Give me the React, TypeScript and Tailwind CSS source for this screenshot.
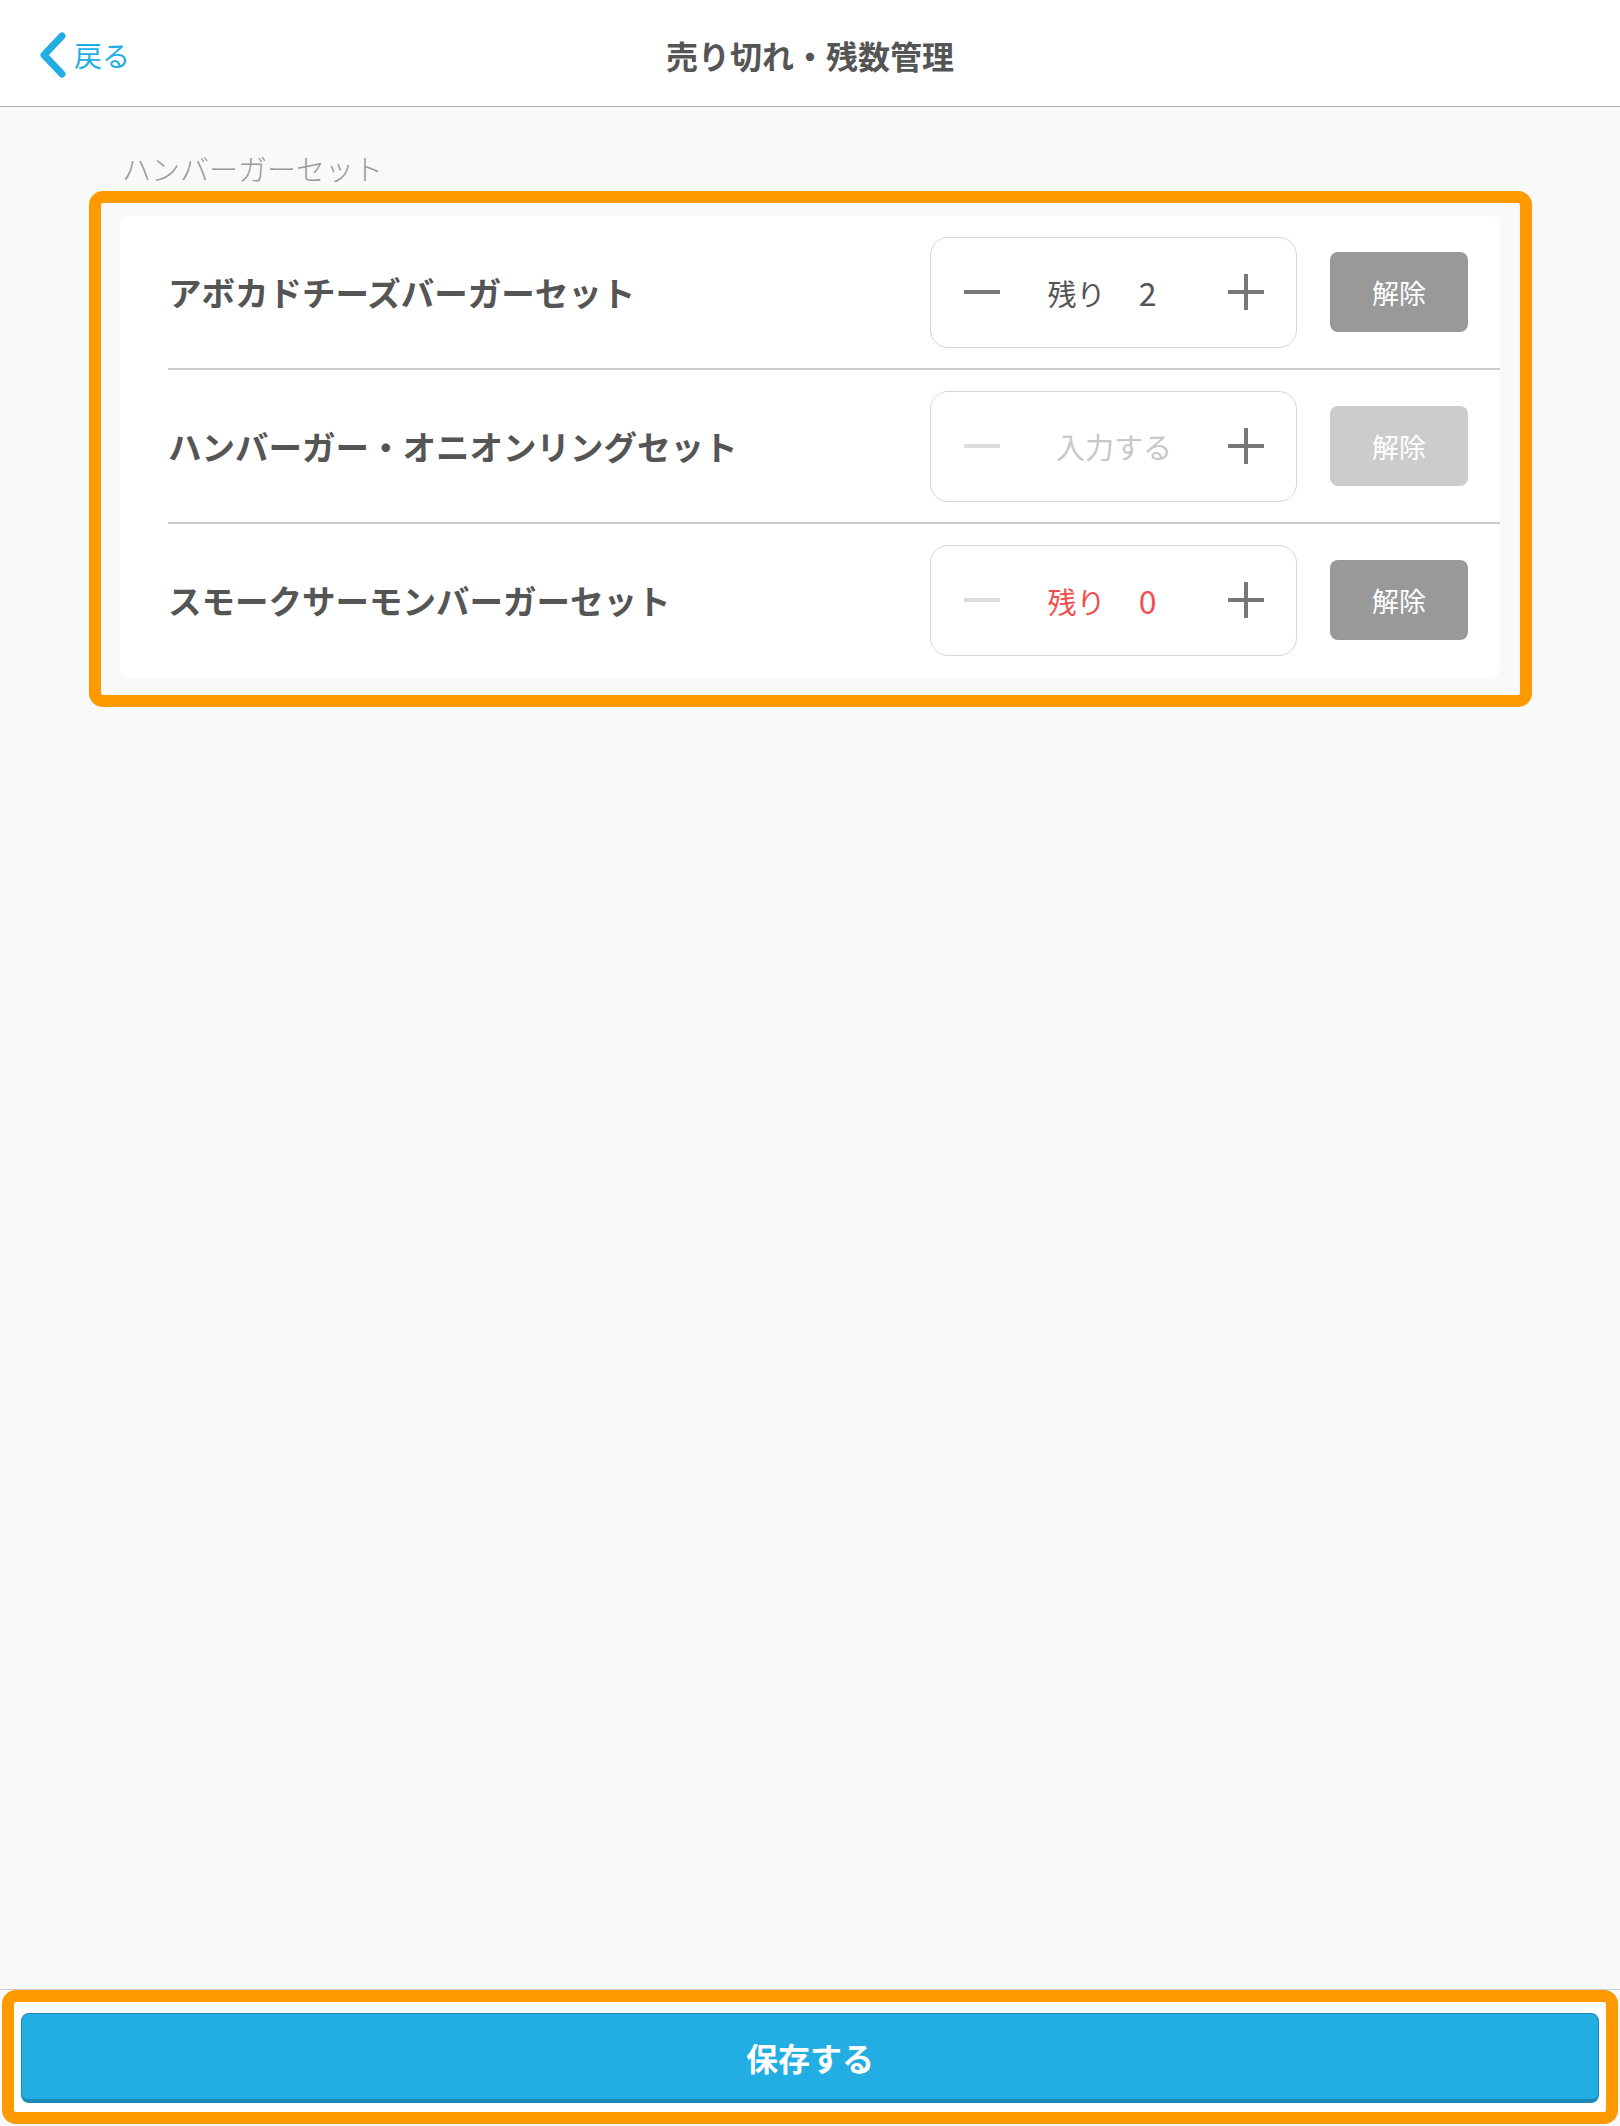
import React from "react";

const font = { fontFamily: '"Noto Sans CJK JP", "Noto Sans", sans-serif' };

type Item = {
  name: string;
  kind: "count" | "empty" | "zero";
  value?: number;
};

const items: Item[] = [
  { name: "アボカドチーズバーガーセット", kind: "count", value: 2 },
  { name: "ハンバーガー・オニオンリングセット", kind: "empty" },
  { name: "スモークサーモンバーガーセット", kind: "zero", value: 0 },
];

function Minus({ active }: { active: boolean }) {
  return (
    <div className={`w-[36px] h-[4px] ${active ? "bg-[#777777]" : "bg-[#dddddd]"}`} />
  );
}

function Plus() {
  return (
    <div className="relative w-[36px] h-[36px]">
      <div className="absolute left-0 top-[16px] w-[36px] h-[4px] bg-[#777777]" />
      <div className="absolute top-0 left-[16px] w-[4px] h-[36px] bg-[#777777]" />
    </div>
  );
}

function Stepper({ item }: { item: Item }) {
  return (
    <div className="w-[367px] h-[111px] rounded-[18px] border-[1.5px] border-[#d6d6d6] bg-white flex items-center pl-[33px] pr-[32px]">
      <Minus active={item.kind === "count"} />
      <div className="flex-1 flex items-center justify-center">
        {item.kind === "empty" ? (
          <span className="text-[29px] text-[#c8c8c8] leading-none">入力する</span>
        ) : (
          <span
            className={`flex items-baseline gap-[33px] mr-[24px] text-[29px] leading-none ${
              item.kind === "zero" ? "text-[#f0504f]" : "text-[#555555]"
            }`}
          >
            <span>残り</span>
            <span className="text-[32px]">{item.value}</span>
          </span>
        )}
      </div>
      <Plus />
    </div>
  );
}

export default function App() {
  return (
    <div className="h-[2126px] w-full flex flex-col bg-[#f9f9f9]" style={font}>
      {/* Header */}
      <header className="h-[107px] bg-white border-b border-[#b3b3b3] grid grid-cols-[1fr_auto_1fr] items-center shrink-0">
        <div className="flex items-center pl-[40px] pt-[4px]">
          <svg width="26" height="46" viewBox="0 0 26 46" className="mr-[8px]">
            <polyline
              points="22,4 4,23 22,42"
              fill="none"
              stroke="#22aee4"
              strokeWidth="7"
              strokeLinecap="round"
              strokeLinejoin="round"
            />
          </svg>
          <span className="text-[28px] text-[#22aee4] leading-none">戻る</span>
        </div>
        <h1 className="text-[32px] font-bold text-[#555555] leading-none pt-[4px]">
          売り切れ・残数管理
        </h1>
        <div />
      </header>

      {/* Main */}
      <main className="flex-1 pt-[40px] pl-[89px]">
        <div className="w-[1443px]">
          <div className="pl-[33px] h-[42px] flex items-center text-[29px] font-light text-[#999999] leading-none">
            ハンバーガーセット
          </div>
          <div className="mt-[2px] border-[12px] border-[#ff9900] rounded-[14px] pt-[13px] pl-[19px] pr-[20px] pb-[17px]">
            <div className="bg-white rounded-[10px] pb-[2px]">
              {items.map((item, i) => (
                <div key={i} className="pl-[48px]">
                  <div
                    className={`flex items-center pr-[32px] ${
                      i < items.length - 1 ? "border-b-2 border-[#cccccc] h-[154px]" : "h-[152px]"
                    }`}
                  >
                    <div className="flex-1 text-[33.5px] font-bold text-[#555555] leading-none">
                      {item.name}
                    </div>
                    <Stepper item={item} />
                    <div
                      className={`ml-[33px] w-[138px] h-[80px] rounded-[8px] flex items-center justify-center text-white text-[27px] leading-none ${
                        item.kind === "empty" ? "bg-[#cccccc]" : "bg-[#999999]"
                      }`}
                    >
                      解除
                    </div>
                  </div>
                </div>
              ))}
            </div>
          </div>
        </div>
      </main>

      {/* Footer */}
      <footer className="shrink-0 h-[137px] border-t border-[#cccccc] bg-[#f9f9f9] px-[2px] pb-[2px] flex">
        <div className="flex-1 border-[12px] border-[#ff9900] rounded-[14px] bg-white pt-[11px] pb-[9px] px-[7px] flex">
          <button className="flex-1 rounded-[8px] bg-[#22aee3] border border-[#1c8ab5] border-b-[4px] flex items-center justify-center text-white text-[32px] font-bold leading-none">
            保存する
          </button>
        </div>
      </footer>
    </div>
  );
}
